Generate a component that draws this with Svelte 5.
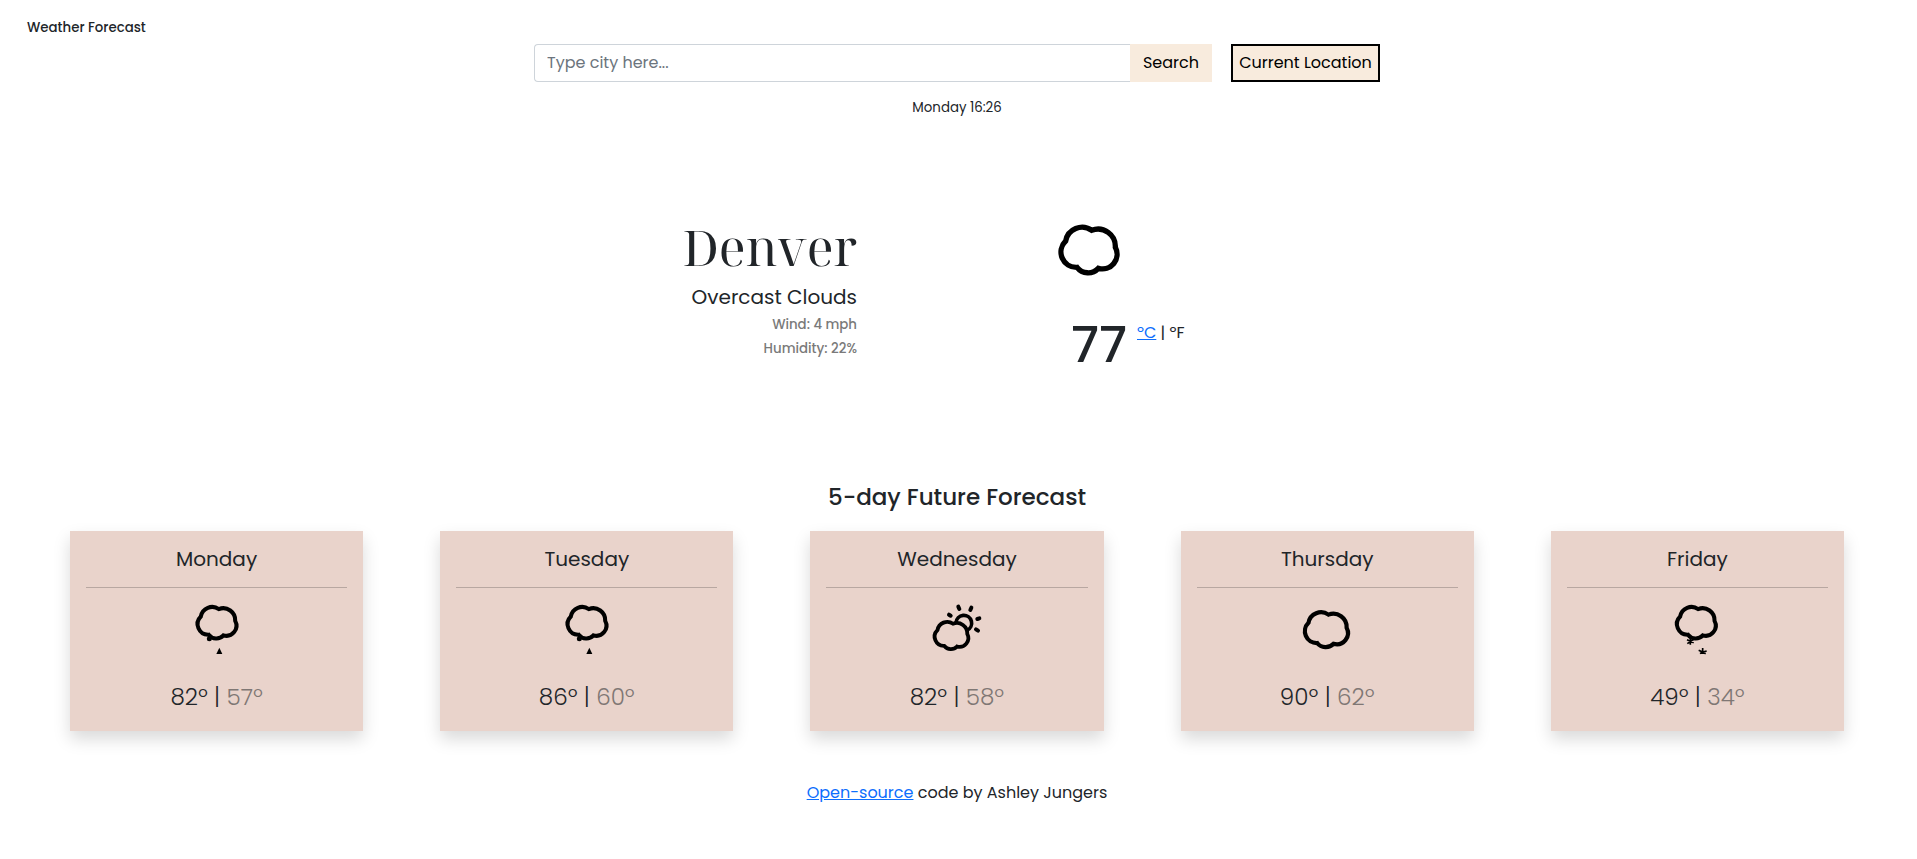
<script>
  let city = $state('');

  const days = [
    { name: 'Monday', icon: 'rain', left: -9, high: 82, low: 57 },
    { name: 'Tuesday', icon: 'rain', left: -9, high: 86, low: 60 },
    { name: 'Wednesday', icon: 'sun', left: 21, high: 82, low: 58 },
    { name: 'Thursday', icon: 'cloud', left: -8, high: 90, low: 62 },
    { name: 'Friday', icon: 'snow', left: -7, high: 49, low: 34 }
  ];

  const cloud =
    'M108 93A50 50 0 0 1 186 61A52 52 0 0 1 257 112A44 44 0 0 1 206 175A42 42 0 0 1 142 172A46 46 0 0 1 108 93Z';
</script>

<main>
  <header>
    <h1>Weather Forecast</h1>
    <form onsubmit={(e) => e.preventDefault()}>
      <input type="text" placeholder="Type city here..." bind:value={city} />
      <button class="search" type="submit">Search</button>
      <button class="locate" type="button">Current Location</button>
    </form>
    <p class="time">Monday 16:26</p>
  </header>

  <section class="current">
    <div class="place">
      <h2>Denver</h2>
      <p class="sky">Overcast Clouds</p>
      <p class="detail">Wind: 4 mph</p>
      <p class="detail">Humidity: 22%</p>
    </div>
    <div class="now">
      <svg width="62" height="52" viewBox="85 42 186 156" fill="none" stroke="#000">
        <path d={cloud} stroke-width="16" />
      </svg>
      <div class="reading">
        <strong>77</strong>
        <span class="units"><a href="#celsius">ºC</a> | ºF</span>
      </div>
    </div>
  </section>

  <section class="future">
    <h3>5-day Future Forecast</h3>
    <div class="cards">
      {#each days as day}
        <article>
          <h4>{day.name}</h4>
          <svg width="80" height="80" viewBox="{day.left} 0 240 240" fill="none" stroke="#000">
            {#if day.icon === 'sun'}
              <path d="M138 98A23.500 23.500 0 1 1 171 121" stroke-width="11" />
              <path
                d="M117 74l5 3M145 50l3 7M184 53l-3 7M202 87l6-2M198 118l6 4"
                stroke-width="12"
                stroke-linecap="round"
              />
              <path d={cloud} transform="translate(17.600 64.500) scale(.6)" stroke-width="19" />
              <path d="M171 130l9 13-9 9z" fill="#000" stroke="none" />
            {:else if day.icon === 'cloud'}
              <path d={cloud} transform="translate(-26.500 27) scale(.768)" stroke-width="16.500" />
            {:else}
              <path d={cloud} transform="translate(-12.200 15) scale(.692)" stroke-width="17.500" />
              {#if day.icon === 'rain'}
                <circle cx="88" cy="146" r="7.500" fill="#000" stroke="none" />
                <path d="M118 173l9 19h-18z" fill="#000" stroke="none" />
              {:else}
                <path
                  d="M93 144v20M83 149l20 9M103 148l-19 13M130 174v18M118 181l12 5 12-3M122 191l8-5 9 5"
                  stroke-width="5"
                />
              {/if}
            {/if}
          </svg>
          <p>{day.high}º | <span>{day.low}º</span></p>
        </article>
      {/each}
    </div>
  </section>

  <footer>
    <a href="#source">Open-source</a> code by Ashley Jungers
  </footer>
</main>

<style>
  :global(body) {
    margin: 0;
    background: #fff;
  }
  main {
    width: 1914px;
    height: 859px;
    overflow: hidden;
    color: #212529;
    font: 400 16px/24px Poppins, Inter, sans-serif;
  }
  h1, h2, h3, h4, p {
    margin: 0;
  }
  a {
    color: #0d6efd;
    text-decoration: underline;
  }
  h1 {
    padding: 18px 27px 6px;
    font-size: 13.33px;
    font-weight: 500;
    line-height: 20px;
  }
  form {
    display: flex;
    padding-left: 534px;
    height: 38px;
  }
  input, button {
    box-sizing: border-box;
    font: inherit;
    border-radius: 0;
  }
  input {
    width: 596px;
    padding: 0 12px;
    border: 1px solid #ced4da;
    border-right: 0;
    border-radius: 4px 0 0 4px;
    outline: none;
  }
  input::placeholder {
    color: #6c757d;
    opacity: 1;
  }
  button {
    padding: 0;
    border: 0;
    background: #f8ebdd;
    color: #000;
  }
  .search {
    width: 82px;
  }
  .locate {
    width: 149px;
    margin-left: 19px;
    border: 2px solid #000;
  }
  .time {
    padding-top: 16px;
    font-size: 13.33px;
    line-height: 20px;
    text-align: center;
  }
  .current {
    display: flex;
    padding-top: 105px;
    height: 259px;
    box-sizing: border-box;
  }
  .place {
    width: 857px;
    text-align: right;
  }
  h2 {
    padding-bottom: 11px;
    font: 400 50px/48px 'Noto Serif Display', 'Liberation Serif', serif;
  }
  .sky {
    font-size: 20px;
    line-height: 30px;
  }
  .detail {
    color: #7a7a7a;
    font-size: 13.33px;
    font-weight: 500;
    line-height: 24px;
  }
  .sky + .detail {
    padding-top: 1px;
  }
  .now {
    padding-left: 201px;
  }
  .now svg {
    display: block;
    margin-top: 1px;
  }
  .reading {
    display: flex;
    padding: 38px 0 0 13px;
  }
  strong {
    width: 66px;
    padding-top: 1px;
    font-size: 50px;
    font-weight: 500;
    line-height: 60px;
  }
  .units {
    padding-top: 7px;
  }
  h3 {
    padding-top: 105px;
    font-size: 23.04px;
    font-weight: 500;
    line-height: 30px;
    text-align: center;
  }
  .cards {
    display: grid;
    grid-template-columns: repeat(5, 1fr);
    gap: 77px;
    padding: 19px 70px 0;
  }
  article {
    box-sizing: border-box;
    height: 200px;
    padding: 0 16px;
    background: #e9d3cb;
    box-shadow: 0 8px 16px rgba(0, 0, 0, 0.15);
    text-align: center;
  }
  h4 {
    height: 56px;
    border-bottom: 1px solid #b8a7a1;
    font-size: 20px;
    font-weight: 400;
    line-height: 56px;
  }
  article svg {
    display: block;
    margin: 2px auto 0;
  }
  article p {
    margin-top: 11px;
    font-size: 23.04px;
    font-weight: 300;
    line-height: 32px;
  }
  article p span {
    color: #7f7774;
  }
  footer {
    padding-top: 50px;
    text-align: center;
  }
</style>
